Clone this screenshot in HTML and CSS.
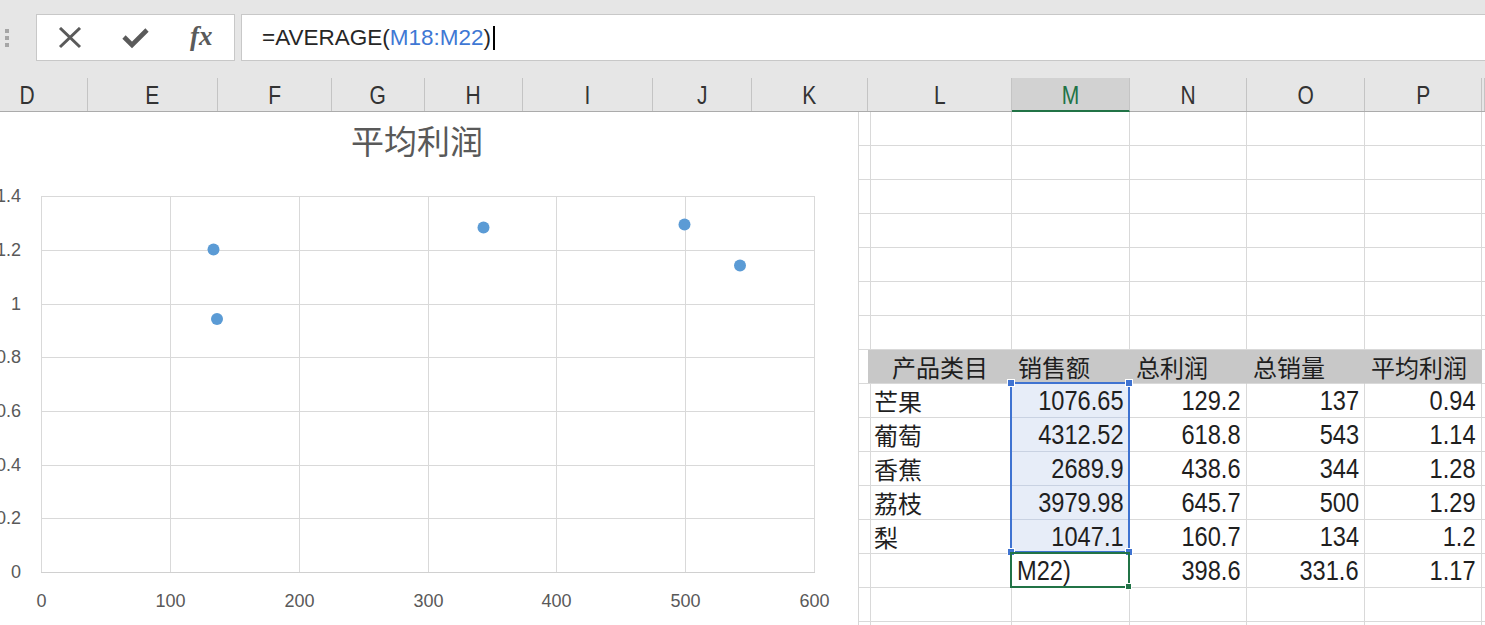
FILE: index.html
```html
<!DOCTYPE html>
<html lang="zh-CN">
<head>
<meta charset="utf-8">
<title>平均利润</title>
<link rel="stylesheet" href="styles.css">
</head>
<body>
<div class="app">
  <div class="toolbar">
    <div class="grip"><span></span><span></span><span></span></div>
    <div class="fx-buttons">
      <div class="fx-slot">
        <svg class="icon" width="24" height="22" viewBox="0 0 24 22"><path d="M2 1 L22 20 M22 1 L2 20" stroke="#5a5a5a" stroke-width="3" fill="none"/></svg>
      </div>
      <div class="fx-slot">
        <svg class="icon" width="28" height="22" viewBox="0 0 28 22"><path d="M2 10 L10 18 L25 3" stroke="#5a5a5a" stroke-width="4.6" fill="none" stroke-linejoin="miter"/></svg>
      </div>
      <div class="fx-slot"><span class="fx">fx</span></div>
    </div>
    <div class="formula">
      <span class="f-dark">=AVERAGE(</span><span class="f-ref">M18:M22</span><span class="f-dark">)</span><span class="caret"></span>
    </div>
  </div>

  <div class="col-headers">
    <div class="ch"><span>D</span></div>
    <div class="ch"><span>E</span></div>
    <div class="ch"><span>F</span></div>
    <div class="ch"><span>G</span></div>
    <div class="ch"><span>H</span></div>
    <div class="ch"><span>I</span></div>
    <div class="ch"><span>J</span></div>
    <div class="ch"><span>K</span></div>
    <div class="ch"><span>L</span></div>
    <div class="ch ch-active"><span>M</span></div>
    <div class="ch"><span>N</span></div>
    <div class="ch"><span>O</span></div>
    <div class="ch"><span>P</span></div>
    <div class="ch"></div>
  </div>

  <div class="sheet">
    <div class="chart">
      <svg class="chart-svg" width="858" height="513" viewBox="0 0 858 513">
        <text class="chart-title" x="417" y="42" text-anchor="middle">平均利润</text>
        <g class="grid-lines">
          <line x1="41" y1="84.5" x2="814" y2="84.5"/>
          <line x1="41" y1="138.5" x2="814" y2="138.5"/>
          <line x1="41" y1="192.5" x2="814" y2="192.5"/>
          <line x1="41" y1="245.5" x2="814" y2="245.5"/>
          <line x1="41" y1="299.5" x2="814" y2="299.5"/>
          <line x1="41" y1="353.5" x2="814" y2="353.5"/>
          <line x1="41" y1="406.5" x2="814" y2="406.5"/>
          <line x1="41.5" y1="84" x2="41.5" y2="460"/>
          <line x1="170.5" y1="84" x2="170.5" y2="460"/>
          <line x1="299.5" y1="84" x2="299.5" y2="460"/>
          <line x1="428.5" y1="84" x2="428.5" y2="460"/>
          <line x1="556.5" y1="84" x2="556.5" y2="460"/>
          <line x1="685.5" y1="84" x2="685.5" y2="460"/>
          <line x1="814.5" y1="84" x2="814.5" y2="460"/>
        </g>
        <line class="axis-line" x1="41" y1="460.5" x2="815" y2="460.5"/>
        <g class="points">
          <circle cx="217" cy="207" r="6"/>
          <circle cx="213.5" cy="137.5" r="6"/>
          <circle cx="483.5" cy="115.5" r="6"/>
          <circle cx="684.5" cy="112.5" r="6"/>
          <circle cx="740" cy="153.5" r="6"/>
        </g>
        <g class="y-labels">
          <text x="21" y="90">1.4</text>
          <text x="21" y="144">1.2</text>
          <text x="21" y="198">1</text>
          <text x="21" y="251">0.8</text>
          <text x="21" y="305">0.6</text>
          <text x="21" y="359">0.4</text>
          <text x="21" y="412">0.2</text>
          <text x="21" y="466">0</text>
        </g>
        <g class="x-labels">
          <text x="41.5" y="495">0</text>
          <text x="170.5" y="495">100</text>
          <text x="299.5" y="495">200</text>
          <text x="428.5" y="495">300</text>
          <text x="556.5" y="495">400</text>
          <text x="685.5" y="495">500</text>
          <text x="814.5" y="495">600</text>
        </g>
      </svg>
    </div>

    <div class="cells">
      <div class="row"><div class="c"></div><div class="c"></div><div class="c"></div><div class="c"></div><div class="c"></div><div class="c"></div><div class="c"></div></div>
      <div class="row"><div class="c"></div><div class="c"></div><div class="c"></div><div class="c"></div><div class="c"></div><div class="c"></div><div class="c"></div></div>
      <div class="row"><div class="c"></div><div class="c"></div><div class="c"></div><div class="c"></div><div class="c"></div><div class="c"></div><div class="c"></div></div>
      <div class="row"><div class="c"></div><div class="c"></div><div class="c"></div><div class="c"></div><div class="c"></div><div class="c"></div><div class="c"></div></div>
      <div class="row"><div class="c"></div><div class="c"></div><div class="c"></div><div class="c"></div><div class="c"></div><div class="c"></div><div class="c"></div></div>
      <div class="row"><div class="c"></div><div class="c"></div><div class="c"></div><div class="c"></div><div class="c"></div><div class="c"></div><div class="c"></div></div>
      <div class="row"><div class="c"></div><div class="c"></div><div class="c"></div><div class="c"></div><div class="c"></div><div class="c"></div><div class="c"></div></div>
      <div class="row row-head">
        <div class="c"></div>
        <div class="c h cjk center">产品类目</div>
        <div class="c h cjk">销售额</div>
        <div class="c h cjk">总利润</div>
        <div class="c h cjk">总销量</div>
        <div class="c h cjk">平均利润</div>
        <div class="c"></div>
      </div>
      <div class="row">
        <div class="c"></div>
        <div class="c cjk">芒果</div>
        <div class="c num sel"><span>1076.65</span></div>
        <div class="c num"><span>129.2</span></div>
        <div class="c num"><span>137</span></div>
        <div class="c num"><span>0.94</span></div>
        <div class="c"></div>
      </div>
      <div class="row">
        <div class="c"></div>
        <div class="c cjk">葡萄</div>
        <div class="c num sel"><span>4312.52</span></div>
        <div class="c num"><span>618.8</span></div>
        <div class="c num"><span>543</span></div>
        <div class="c num"><span>1.14</span></div>
        <div class="c"></div>
      </div>
      <div class="row">
        <div class="c"></div>
        <div class="c cjk">香蕉</div>
        <div class="c num sel"><span>2689.9</span></div>
        <div class="c num"><span>438.6</span></div>
        <div class="c num"><span>344</span></div>
        <div class="c num"><span>1.28</span></div>
        <div class="c"></div>
      </div>
      <div class="row">
        <div class="c"></div>
        <div class="c cjk">荔枝</div>
        <div class="c num sel"><span>3979.98</span></div>
        <div class="c num"><span>645.7</span></div>
        <div class="c num"><span>500</span></div>
        <div class="c num"><span>1.29</span></div>
        <div class="c"></div>
      </div>
      <div class="row">
        <div class="c"></div>
        <div class="c cjk">梨</div>
        <div class="c num sel"><span>1047.1</span></div>
        <div class="c num"><span>160.7</span></div>
        <div class="c num"><span>134</span></div>
        <div class="c num"><span>1.2</span></div>
        <div class="c"></div>
      </div>
      <div class="row">
        <div class="c"></div>
        <div class="c"></div>
        <div class="c txt"><span>M22)</span></div>
        <div class="c num"><span>398.6</span></div>
        <div class="c num"><span>331.6</span></div>
        <div class="c num"><span>1.17</span></div>
        <div class="c"></div>
      </div>
      <div class="row"><div class="c"></div><div class="c"></div><div class="c"></div><div class="c"></div><div class="c"></div><div class="c"></div><div class="c"></div></div>
      <div class="row"><div class="c"></div><div class="c"></div><div class="c"></div><div class="c"></div><div class="c"></div><div class="c"></div><div class="c"></div></div>

      <div class="selection">
        <span class="handle h-tl"></span>
        <span class="handle h-tr"></span>
        <span class="handle h-bl"></span>
        <span class="handle h-br"></span>
      </div>
      <div class="active-cell"><span class="fill-handle"></span></div>
    </div>
  </div>
</div>
</body>
</html>
```

FILE: styles.css
```css
* { box-sizing: border-box; }

html, body {
  margin: 0;
  padding: 0;
  width: 1485px;
  height: 625px;
  overflow: hidden;
  background: #ffffff;
}

.app {
  width: 1485px;
  height: 625px;
  overflow: hidden;
  font-family: "Liberation Sans", Arial, sans-serif;
}

/* ---------- formula bar ---------- */
.toolbar {
  height: 78px;
  background: #e6e6e6;
  display: flex;
  align-items: flex-start;
  padding-top: 14px;
}

.grip {
  width: 36px;
  padding-left: 5px;
  padding-top: 15px;
  display: flex;
  flex-direction: column;
  gap: 3px;
}
.grip span {
  display: block;
  width: 4px;
  height: 4px;
  background: #a6a6a6;
}

.fx-buttons {
  width: 199px;
  height: 47px;
  background: #ffffff;
  border: 1px solid #c8c8c8;
  display: flex;
}
.fx-slot {
  flex: 1;
  display: flex;
  align-items: center;
  justify-content: center;
}
.fx {
  font-family: "Liberation Serif", "Times New Roman", serif;
  font-style: italic;
  font-weight: bold;
  font-size: 27px;
  color: #5a5a5a;
  margin-top: -2px;
}

.formula {
  flex: 1;
  height: 47px;
  margin-left: 6px;
  margin-right: -4px;
  background: #ffffff;
  border: 1px solid #c8c8c8;
  display: flex;
  align-items: center;
  padding-left: 20px;
  font-size: 22.5px;
  color: #262626;
}
.f-ref { color: #3f78d4; }
.caret {
  display: inline-block;
  width: 2px;
  height: 24px;
  background: #000000;
  margin-left: 2px;
}

/* ---------- column headers ---------- */
.col-headers {
  height: 34px;
  margin-left: -32px;
  width: 1517px;
  display: grid;
  grid-template-columns: 120px 130px 114px 93px 98px 130px 99px 116px 144px 118px 117px 118px 117px 1fr;
  background: #e6e6e6;
  border-bottom: 1px solid #ababab;
}
.ch {
  border-right: 1px solid #c4c4c4;
  display: flex;
  align-items: center;
  justify-content: center;
  font-family: "Liberation Sans", Arial, sans-serif;
  font-size: 25px;
  color: #333333;
  padding-top: 2px;
}
.ch span {
  display: inline-block;
  transform: scaleX(0.84);
}
.ch-active {
  background: #d2d2d2;
  color: #217346;
  border-bottom: 2px solid #217346;
  margin-bottom: -1px;
  padding-top: 3px;
}

/* ---------- sheet ---------- */
.sheet {
  display: flex;
  height: 513px;
}

.chart {
  width: 859px;
  flex: none;
  background: #ffffff;
  border-right: 1px solid #d6d6d6;
  overflow: hidden;
}
.chart-svg { display: block; }
.chart-title {
  font-family: "Noto Sans CJK SC", sans-serif;
  font-size: 33px;
  fill: #595959;
}
.grid-lines line {
  stroke: #d9d9d9;
  stroke-width: 1;
}
.axis-line {
  stroke: #d0d0d0;
  stroke-width: 1;
}
.points circle { fill: #5b9bd5; }
.y-labels text {
  font-family: "Liberation Sans", sans-serif;
  font-size: 18px;
  fill: #595959;
  text-anchor: end;
}
.x-labels text {
  font-family: "Liberation Sans", sans-serif;
  font-size: 18px;
  fill: #595959;
  text-anchor: middle;
}

.cells {
  flex: 1;
  position: relative;
}
.row {
  display: grid;
  grid-template-columns: 9px 144px 118px 117px 118px 117px 1fr;
  height: 34px;
}
.c {
  border-right: 1px solid #d9d9d9;
  border-bottom: 1px solid #d9d9d9;
  display: flex;
  align-items: center;
  padding: 0 5px 0 6px;
  font-family: "Liberation Sans", Arial, sans-serif;
  font-size: 27px;
  color: #1f1f1f;
  white-space: nowrap;
  overflow: hidden;
}
.c span {
  display: inline-block;
  transform: scaleX(0.875);
}
.cjk {
  font-family: "Noto Sans CJK SC", sans-serif;
  font-size: 24px;
}
.num { justify-content: flex-end; padding-top: 1px; }
.num span { transform-origin: right center; }
.center { justify-content: center; }
.txt { padding-left: 5px; padding-top: 1px; }
.txt span { transform-origin: left center; }

.row-head .h {
  background: #c8c8c8;
  border-right-color: #c8c8c8;
}
.row-head .c:first-child { border-bottom-color: #d9d9d9; }

.sel {
  background: #e7edf8;
  border-bottom-color: #c9d2e2;
}

.selection {
  position: absolute;
  left: 151px;
  top: 270px;
  width: 120px;
  height: 171px;
  border: 2px solid #3f73d1;
}
.handle {
  position: absolute;
  width: 8px;
  height: 8px;
  background: #3f73d1;
  border: 1px solid #ffffff;
}
.h-tl { left: -5px; top: -5px; }
.h-tr { right: -5px; top: -5px; }
.h-bl { left: -5px; bottom: -5px; }
.h-br { right: -5px; bottom: -5px; }

.active-cell {
  position: absolute;
  left: 151px;
  top: 440px;
  width: 120px;
  height: 36px;
  border: 2px solid #217346;
}
.fill-handle {
  position: absolute;
  right: -4px;
  bottom: -4px;
  width: 7px;
  height: 7px;
  background: #217346;
  border: 1px solid #ffffff;
}
```
